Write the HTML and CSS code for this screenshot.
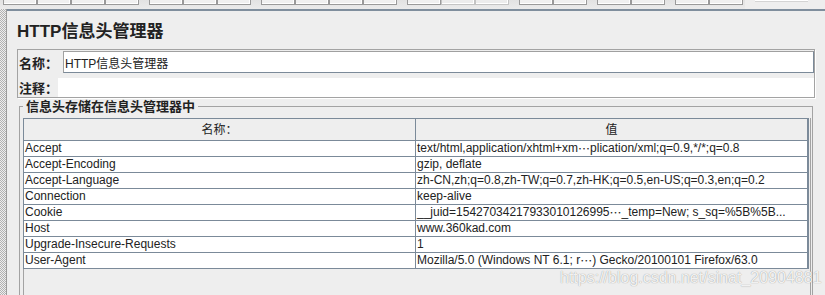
FILE: index.html
```html
<!DOCTYPE html>
<html lang="zh-CN">
<head>
  <meta charset="UTF-8" />
  <title>HTTP信息头管理器</title>
  <link rel="stylesheet" href="styles.css">
</head>
<body>

<div class="toolbar">
  <div class="tools">
    <div class="tb-group"><span class="tb-btn"></span><span class="tb-btn"></span><span class="tb-btn"></span><span class="tb-btn"></span></div>
    <div class="tb-group"><span class="tb-btn"></span><span class="tb-btn"></span><span class="tb-btn"></span></div>
    <div class="tb-group"><span class="tb-btn"></span><span class="tb-btn"></span><span class="tb-btn"></span><span class="tb-btn"></span></div>
    <div class="tb-group"><span class="tb-btn"></span><span class="tb-btn off"></span><span class="tb-btn off"></span></div>
    <div class="tb-group"><span class="tb-btn"></span><span class="tb-btn"></span></div>
    <div class="tb-group"><span class="tb-btn"></span><span class="tb-btn"></span></div>
    <div class="tb-group"><span class="tb-btn"></span><span class="tb-btn"></span></div>
  </div>
  <div class="search"></div>
</div>

<div class="frame">
  <div class="dock"></div>

  <div class="content">
    <h1 class="title">HTTP信息头管理器</h1>

    <div class="props">
      <div class="prop-row name-row">
        <label class="prop-label">名称：</label>
        <input class="prop-field" type="text" value="HTTP信息头管理器" />
      </div>
      <div class="prop-row comment-row">
        <label class="prop-label">注释：</label>
        <input class="comment-field" type="text" value="" />
      </div>
    </div>

    <fieldset class="headers">
      <legend>信息头存储在信息头管理器中</legend>
      <div class="scroll">
        <table class="header-table">
          <thead>
            <tr><th class="col-name">名称：</th><th>值</th></tr>
          </thead>
          <tbody>
            <tr><td>Accept</td><td>text/html,application/xhtml+xm<span class="ell">⋯</span>plication/xml;q=0.9,*/*;q=0.8</td></tr>
            <tr><td>Accept-Encoding</td><td>gzip, deflate</td></tr>
            <tr><td>Accept-Language</td><td>zh-CN,zh;q=0.8,zh-TW;q=0.7,zh-HK;q=0.5,en-US;q=0.3,en;q=0.2</td></tr>
            <tr><td>Connection</td><td>keep-alive</td></tr>
            <tr><td>Cookie</td><td>__juid=15427034217933010126995<span class="ell">⋯</span>_temp=New; s_sq=%5B%5B...</td></tr>
            <tr><td>Host</td><td>www.360kad.com</td></tr>
            <tr><td>Upgrade-Insecure-Requests</td><td>1</td></tr>
            <tr><td>User-Agent</td><td>Mozilla/5.0 (Windows NT 6.1; r<span class="ell">⋯</span>) Gecko/20100101 Firefox/63.0</td></tr>
          </tbody>
        </table>
      </div>
    </fieldset>
  </div>
</div>

<div class="watermark">https://blog.csdn.net/sinat_20904881</div>

</body>
</html>
```

FILE: styles.css
```css
* { box-sizing: border-box; }
html, body { margin: 0; height: 100%; overflow: hidden; }
body {
  background: #eeeeee;
  color: #222;
  font-family: "Liberation Sans", "Noto Sans CJK SC", sans-serif;
}

/* --- top toolbar (only its lower edge is visible) --- */
.toolbar {
  display: flex;
  height: 9px;
}
.tools {
  display: flex;
  width: 745px;
  padding-left: 3px;
  background: linear-gradient(#e2e2e2, #ebebeb);
}
.tb-group {
  display: flex;
  margin-right: 10px;
}
.tb-btn {
  width: 34px;
  height: 5px;
  border: 1px solid #9a9a9a;
  border-top: 0;
  background: #f0f0f0;
  box-shadow: inset -1px -1px 0 #fff;
}
.tb-btn.off {
  border-color: #c4c4c4;
  background: #ececec;
}
.search {
  margin-left: 10px;
  width: 53px;
  height: 2px;
  background: #fff;
  border-bottom: 1px solid #d4d4d4;
}

/* --- frame --- */
.frame {
  display: flex;
  height: 286px;
}
.dock {
  width: 7px;
  border-right: 1px solid #9c9c9c;
  background: repeating-conic-gradient(#b2b2b2 0 25%, #eeeeee 0 50%) 0 0 / 2px 2px;
}
.content {
  flex: 1;
  border-top: 2px solid #7f8e9d;
  padding: 11px 10px 0;
  overflow: hidden;
}
.title {
  margin: 0;
  font-size: 17px;
  line-height: 20px;
  font-weight: bold;
  color: #222;
}

/* --- name / comment --- */
.props {
  margin-top: 7px;
  border: 1px solid #a3a3a3;
  box-shadow: 1px 1px 0 #fff;
  padding: 1px 0 0 0;
}
.prop-row {
  display: flex;
  align-items: center;
}
.name-row { height: 22px; }
.comment-row { height: 19px; margin-top: 5px; }
.prop-label {
  padding-left: 1px;
  font-size: 13px;
  font-weight: bold;
  white-space: nowrap;
}
.name-row .prop-label { width: 45px; }
.comment-row .prop-label { width: 40px; }
.prop-field {
  flex: 1;
  min-width: 0;
  height: 22px;
  margin: 0;
  padding: 0 1px;
  border: 1px solid;
  border-color: #a0a0a0 #7b8a99 #7b8a99 #a0a0a0;
  background: #fff;
  color: #222;
  font: 12px "Liberation Sans", "Noto Sans CJK SC", sans-serif;
  outline: none;
}
.comment-field {
  flex: 1;
  min-width: 0;
  height: 19px;
  margin: 0;
  padding: 0;
  border: 0;
  background: #fff;
  outline: none;
}

/* --- headers group --- */
.headers {
  margin: 2px 2px 0;
  padding: 5px 1px 0 3px;
  border: 1px solid #a3a3a3;
  min-width: 0;
  height: 220px;
}
.headers legend {
  padding: 0 3px;
  font-size: 13px;
  line-height: 13px;
  font-weight: bold;
}
.scroll {
  height: 200px;
  border-left: 1px solid #a3a3a3;
  border-right: 1px solid #a3a3a3;
  padding-right: 1px;
}
.header-table {
  margin-left: -1px;
  width: calc(100% + 1px);
  table-layout: fixed;
  border-collapse: separate;
  border-spacing: 0;
  border-top: 1px solid #7b8a99;
  border-left: 1px solid #7b8a99;
  border-right: 1px solid #7b8a99;
  background: #fff;
  font-size: 12px;
}
.header-table th,
.header-table td {
  border-right: 1px solid #7b8a99;
  border-bottom: 1px solid #7b8a99;
  white-space: nowrap;
  overflow: hidden;
}
.header-table th {
  background: #eeeeee;
  padding: 1px 0 0;
  line-height: 20px;
  font-weight: normal;
  text-align: center;
}
.header-table .col-name { width: 392px; }
.header-table td {
  padding: 0 0 0 1px;
  line-height: 15px;
}
.ell {
  display: inline-block;
  height: 15px;
  line-height: 15px;
  vertical-align: top;
  font-family: "Noto Sans CJK SC", sans-serif;
}

.watermark {
  position: absolute;
  left: 560px;
  top: 269px;
  font: 16px "Liberation Sans", sans-serif;
  color: rgba(255, 255, 255, 0.9);
  text-shadow: 0 0 1px rgba(0, 0, 0, 0.45);
  white-space: nowrap;
}
```
